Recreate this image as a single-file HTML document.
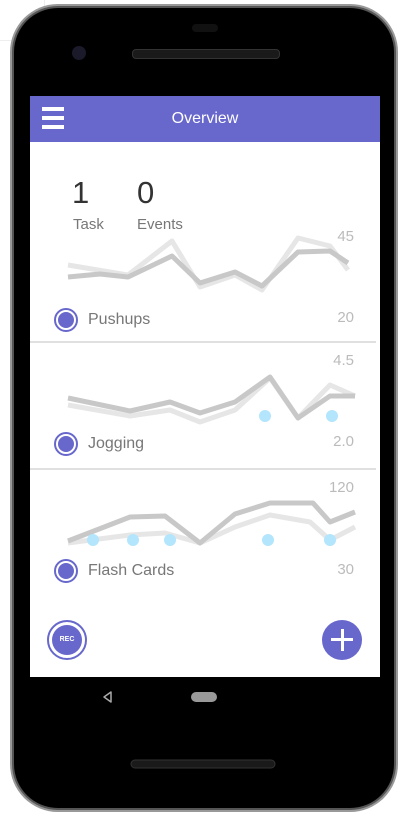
<!DOCTYPE html><html><head><style>
body{margin:0;width:406px;height:818px;background:#fff;position:relative;overflow:hidden;font-family:"Liberation Sans",sans-serif}
.phone{position:absolute;left:14px;top:8px;width:380px;height:800px;background:#000;border-radius:44px;box-shadow:0 0 0 2px #555,0 0 0 4px #999}
.screen{position:absolute;left:30px;top:96px;width:350px;height:581px;background:#fff}
.hdr{position:absolute;left:0;top:0;width:350px;height:46px;background:#6767cc;color:#fff;font-size:16px;text-align:center;line-height:46px}
.t{position:absolute;color:#777;font-size:15px}
.n{position:absolute;color:#333;font-size:31px}
.r{position:absolute;color:#bbb;font-size:15px;text-align:right;width:40px}
.rad{position:absolute;width:24px;height:24px;border:2px solid #6767cc;border-radius:50%;box-sizing:border-box}
.rad:after{content:"";position:absolute;left:2px;top:2px;width:16px;height:16px;border-radius:50%;background:#6767cc}
</style></head><body>
<div style="position:absolute;left:0;top:0;width:44px;height:40px;border-right:1px solid #eee;border-bottom:1px solid #eee"></div>
<div class="phone"></div>
<div style="position:absolute;left:72px;top:46px;width:14px;height:14px;border-radius:50%;background:#1a1a2a"></div>
<div style="position:absolute;left:132px;top:49px;width:146px;height:8px;border-radius:4px;background:#1a1a1a;border:1px solid #333"></div>
<div style="position:absolute;left:192px;top:24px;width:26px;height:8px;border-radius:4px;background:#111"></div>
<div class="screen">
<div class="hdr">Overview</div>
<div style="position:absolute;left:12px;top:11px;width:22px;height:4px;background:#fff;box-shadow:0 9px 0 #fff,0 18px 0 #fff"></div>
<div class="n" style="left:42px;top:79px">1</div><div class="n" style="left:107px;top:79px">0</div>
<div class="t" style="left:43px;top:120px">Task</div><div class="t" style="left:107px;top:120px">Events</div>
<div style="position:absolute;left:0;top:245px;width:346px;height:2px;background:#e0e0e0"></div>
<div style="position:absolute;left:0;top:372px;width:346px;height:2px;background:#e0e0e0"></div>
<div class="rad" style="left:24px;top:212px"></div><div class="t" style="left:58px;top:215px;font-size:16px">Pushups</div>
<div class="rad" style="left:24px;top:336px"></div><div class="t" style="left:58px;top:339px;font-size:16px">Jogging</div>
<div class="rad" style="left:24px;top:463px"></div><div class="t" style="left:58px;top:466px;font-size:16px">Flash Cards</div>
<div class="r" style="left:284px;top:132px">45</div><div class="r" style="left:284px;top:213px">20</div>
<div class="r" style="left:284px;top:256px">4.5</div><div class="r" style="left:284px;top:337px">2.0</div>
<div class="r" style="left:284px;top:383px">120</div><div class="r" style="left:284px;top:465px">30</div>
<div style="position:absolute;left:17px;top:524px;width:40px;height:40px;border-radius:50%;border:2px solid #6767cc;box-sizing:border-box"><div style="position:absolute;left:3px;top:3px;width:30px;height:30px;border-radius:50%;background:#6767cc;color:#fff;font-size:7px;font-weight:bold;text-align:center;line-height:30px">REC</div></div>
<div style="position:absolute;left:292px;top:524px;width:40px;height:40px;border-radius:50%;background:#6767cc"><div style="position:absolute;left:9px;top:18px;width:22px;height:3px;background:#fff"></div><div style="position:absolute;left:18.5px;top:9px;width:3px;height:22px;background:#fff"></div></div>
</div>
<svg style="position:absolute;left:0;top:0" width="406" height="818" fill="none" stroke-width="5" stroke-linejoin="round">
<polyline stroke="#e6e6e6" points="68,265 128,275 172,241 200,287 235,275 262,290 298,238 330,246 348,270"/>
<polyline stroke="#c8c8c8" points="68,277 100,274 128,277 172,256 200,283 235,272 262,286 298,252 330,251 348,263"/>
<polyline stroke="#e6e6e6" points="68,405 130,416 170,410 200,422 235,410 270,378 298,418 330,385 355,396"/>
<polyline stroke="#c8c8c8" points="68,398 130,411 170,402 200,413 235,402 270,377 298,418 330,396 355,396"/>
<polyline stroke="#e6e6e6" points="68,543 130,535 165,533 200,543 235,527 270,515 310,522 330,540 355,527"/>
<polyline stroke="#c8c8c8" points="68,541 130,517 165,516 200,543 235,514 270,503 313,503 330,522 355,512"/>
<g fill="#b3e5fc" stroke="none"><circle cx="265" cy="416" r="6"/><circle cx="332" cy="416" r="6"/>
<circle cx="93" cy="540" r="6"/><circle cx="133" cy="540" r="6"/><circle cx="170" cy="540" r="6"/><circle cx="268" cy="540" r="6"/><circle cx="330" cy="540" r="6"/></g>
<path d="M111,692 L104,697 L111,702 Z" stroke="#aaa" stroke-width="1.5" fill="none"/>
<rect x="191" y="692" width="26" height="10" rx="5" fill="#999" stroke="none"/>
<rect x="131" y="760" width="144" height="8" rx="4" fill="#1a1a1a" stroke="#333" stroke-width="1"/>
</svg>
</body></html>
